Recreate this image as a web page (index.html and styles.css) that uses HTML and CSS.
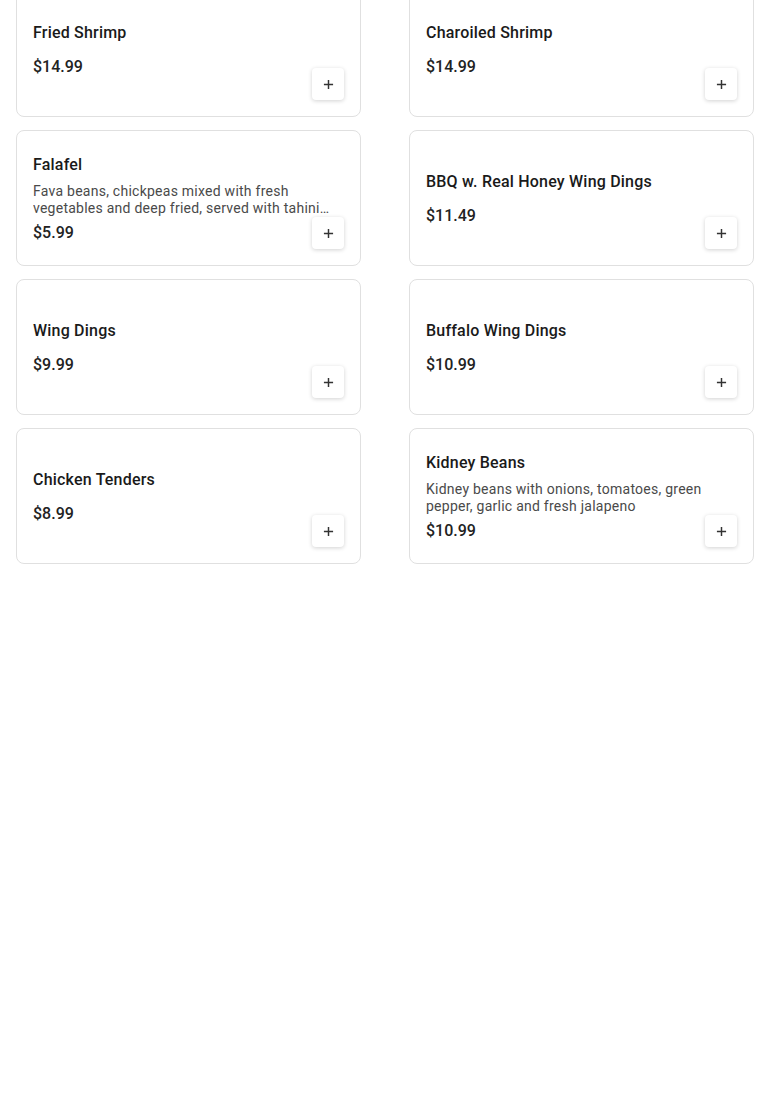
FILE: index.html
```html
<!DOCTYPE html>
<html lang="en">
<head>
    <meta charset="UTF-8">
    <meta name="viewport" content="width=device-width, initial-scale=1.0">
    <title>Menu</title>
    <link rel="stylesheet" href="styles.css">
</head>
<body>
    <main class="menu-grid">
        <div class="menu-card">
            <div class="item-info">
                <h3 class="item-name">Fried Shrimp</h3>
                <p class="item-price">$14.99</p>
            </div>
            <button class="add-button" aria-label="Add"><svg viewBox="0 0 12 12"><path d="M6 1v10M1 6h10"/></svg></button>
        </div>
        <div class="menu-card">
            <div class="item-info">
                <h3 class="item-name">Charoiled Shrimp</h3>
                <p class="item-price">$14.99</p>
            </div>
            <button class="add-button" aria-label="Add"><svg viewBox="0 0 12 12"><path d="M6 1v10M1 6h10"/></svg></button>
        </div>
        <div class="menu-card">
            <div class="item-info">
                <h3 class="item-name">Falafel</h3>
                <p class="item-desc">Fava beans, chickpeas mixed with fresh vegetables and deep fried, served with tahini sauce and pita bread</p>
                <p class="item-price">$5.99</p>
            </div>
            <button class="add-button" aria-label="Add"><svg viewBox="0 0 12 12"><path d="M6 1v10M1 6h10"/></svg></button>
        </div>
        <div class="menu-card">
            <div class="item-info">
                <h3 class="item-name">BBQ w. Real Honey Wing Dings</h3>
                <p class="item-price">$11.49</p>
            </div>
            <button class="add-button" aria-label="Add"><svg viewBox="0 0 12 12"><path d="M6 1v10M1 6h10"/></svg></button>
        </div>
        <div class="menu-card">
            <div class="item-info">
                <h3 class="item-name">Wing Dings</h3>
                <p class="item-price">$9.99</p>
            </div>
            <button class="add-button" aria-label="Add"><svg viewBox="0 0 12 12"><path d="M6 1v10M1 6h10"/></svg></button>
        </div>
        <div class="menu-card">
            <div class="item-info">
                <h3 class="item-name">Buffalo Wing Dings</h3>
                <p class="item-price">$10.99</p>
            </div>
            <button class="add-button" aria-label="Add"><svg viewBox="0 0 12 12"><path d="M6 1v10M1 6h10"/></svg></button>
        </div>
        <div class="menu-card">
            <div class="item-info">
                <h3 class="item-name">Chicken Tenders</h3>
                <p class="item-price">$8.99</p>
            </div>
            <button class="add-button" aria-label="Add"><svg viewBox="0 0 12 12"><path d="M6 1v10M1 6h10"/></svg></button>
        </div>
        <div class="menu-card">
            <div class="item-info">
                <h3 class="item-name">Kidney Beans</h3>
                <p class="item-desc">Kidney beans with onions, tomatoes, green pepper, garlic and fresh jalapeno</p>
                <p class="item-price">$10.99</p>
            </div>
            <button class="add-button" aria-label="Add"><svg viewBox="0 0 12 12"><path d="M6 1v10M1 6h10"/></svg></button>
        </div>
    </main>
</body>
</html>
```

FILE: styles.css
```css
/* General */
body {
    font-family: Roboto, "Liberation Sans", Arial, sans-serif;
    margin: 0;
    padding: 0;
    background-color: #fff;
    color: #1f1f1f;
}

.menu-grid {
    display: grid;
    grid-template-columns: 1fr 1fr;
    column-gap: 48px;
    row-gap: 13px;
    padding: 0 16px;
    margin-top: -19px;
}

.menu-card {
    position: relative;
    display: flex;
    align-items: center;
    height: 136px;
    box-sizing: border-box;
    padding: 0 16px;
    border: 1px solid #e0e0e0;
    border-radius: 8px;
    background: #fff;
}

.item-info {
    width: 100%;
    padding-top: 2px;
}

.item-name {
    margin: 0;
    font-size: 16px;
    font-weight: 500;
    line-height: 24px;
    letter-spacing: 0.2px;
    color: #1a1a1a;
}

.item-desc {
    margin: 6px 0 4px;
    font-size: 14px;
    line-height: 17px;
    letter-spacing: 0.25px;
    color: #4a4a4a;
    display: -webkit-box;
    -webkit-line-clamp: 2;
    -webkit-box-orient: vertical;
    overflow: hidden;
}

.item-price {
    margin: 0;
    font-size: 16px;
    font-weight: 500;
    line-height: 24px;
    color: #222;
}

.item-name + .item-price {
    margin-top: 10px;
}

.add-button {
    position: absolute;
    right: 16px;
    bottom: 16px;
    width: 32px;
    height: 32px;
    padding: 0;
    display: flex;
    align-items: center;
    justify-content: center;
    background: #fff;
    border: none;
    border-radius: 4px;
    box-shadow: 0 1px 4px rgba(0, 0, 0, 0.18);
    cursor: pointer;
}

.add-button svg {
    width: 11px;
    height: 11px;
    stroke: #333;
    stroke-width: 1.6;
    fill: none;
}
```
